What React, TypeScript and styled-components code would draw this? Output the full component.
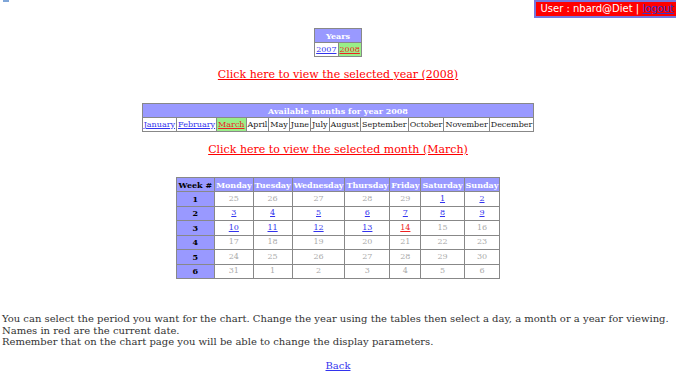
import React from 'react'
import styled, { createGlobalStyle } from 'styled-components'

const GlobalStyle = createGlobalStyle`
    html, body {
        margin: 0;
        padding: 0;
        background: #ffffff;
    }
    body {
        font-family: "DejaVu Serif", serif;
        font-size: 10px;
        color: #333333;
    }
`

const months = ['January', 'February', 'March', 'April', 'May', 'June', 'July', 'August', 'September', 'October', 'November', 'December']
const days = ['Monday', 'Tuesday', 'Wednesday', 'Thursday', 'Friday', 'Saturday', 'Sunday']

type Day = { n: number; kind: 'off' | 'link' | 'today' }

const off = (n: number): Day => ({ n, kind: 'off' })
const link = (n: number): Day => ({ n, kind: 'link' })

const weeks: Day[][] = [
    [off(25), off(26), off(27), off(28), off(29), link(1), link(2)],
    [link(3), link(4), link(5), link(6), link(7), link(8), link(9)],
    [link(10), link(11), link(12), link(13), { n: 14, kind: 'today' }, off(15), off(16)],
    [off(17), off(18), off(19), off(20), off(21), off(22), off(23)],
    [off(24), off(25), off(26), off(27), off(28), off(29), off(30)],
    [off(31), off(1), off(2), off(3), off(4), off(5), off(6)],
]

const App = () => {
    return (
        <Page>
            <GlobalStyle />
            <TopBar>
                <Corner />
                <UserBox>
                    User : nbard@Diet | <LogoutLink href='#'>logout</LogoutLink>
                </UserBox>
            </TopBar>

            <Grid>
                <thead>
                    <tr>
                        <HeadCell colSpan={2}>Years</HeadCell>
                    </tr>
                </thead>
                <tbody>
                    <tr>
                        <Cell><BlueLink href='#'>2007</BlueLink></Cell>
                        <Cell selected><RedLink href='#'>2008</RedLink></Cell>
                    </tr>
                </tbody>
            </Grid>

            <BigLink href='#' top={11}>Click here to view the selected year (2008)</BigLink>

            <Grid top={22}>
                <thead>
                    <tr>
                        <HeadCell colSpan={12}>Available months for year 2008</HeadCell>
                    </tr>
                </thead>
                <tbody>
                    <tr>
                        {months.map((m, i) => (
                            <Cell key={m} selected={i === 2}>
                                {i < 2 && <BlueLink href='#'>{m}</BlueLink>}
                                {i === 2 && <RedLink href='#'>{m}</RedLink>}
                                {i > 2 && <Plain>{m}</Plain>}
                            </Cell>
                        ))}
                    </tr>
                </tbody>
            </Grid>

            <BigLink href='#' top={11}>Click here to view the selected month (March)</BigLink>

            <Calendar>
                <thead>
                    <tr>
                        <WeekHead>Week #</WeekHead>
                        {days.map(d => (
                            <HeadCell key={d}>{d}</HeadCell>
                        ))}
                    </tr>
                </thead>
                <tbody>
                    {weeks.map((w, i) => (
                        <tr key={i}>
                            <WeekCell>{i + 1}</WeekCell>
                            {w.map((d, j) => (
                                <DayCell key={j}>
                                    {d.kind === 'off' && <Faded>{d.n}</Faded>}
                                    {d.kind === 'link' && <BlueLink href='#'>{d.n}</BlueLink>}
                                    {d.kind === 'today' && <RedLink href='#'>{d.n}</RedLink>}
                                </DayCell>
                            ))}
                        </tr>
                    ))}
                </tbody>
            </Calendar>

            <Notes>
                <p>You can select the period you want for the chart. Change the year using the tables then select a day, a month or a year for viewing.</p>
                <p>Names in red are the current date.</p>
                <p>Remember that on the chart page you will be able to change the display parameters.</p>
            </Notes>

            <BackLink href='#'>Back</BackLink>
        </Page>
    )
}

export default App

const Page = styled.div`
    display: flex;
    flex-direction: column;
    align-items: center;
    width: 676px;
    height: 375px;
    overflow: hidden;
`

const TopBar = styled.div`
    display: flex;
    justify-content: space-between;
    align-items: flex-start;
    width: 100%;
    height: 18px;
`

const Corner = styled.span`
    display: block;
    width: 6px;
    height: 2px;
    margin-left: 3px;
    background: #7fa6d8;
`

const UserBox = styled.div`
    box-sizing: border-box;
    height: 18px;
    padding: 0 2px 0 4px;
    background: #ff0000;
    border: 2px solid #7777dd;
    border-right: none;
    color: #ffffff;
    font-family: "DejaVu Sans", sans-serif;
    font-size: 10px;
    line-height: 14px;
    white-space: nowrap;
`

const LogoutLink = styled.a`
    color: #3333cc;
    text-decoration: underline;
`

const Grid = styled.table<{ top?: number }>`
    margin-top: ${p => p.top ?? 10}px;
    border-collapse: collapse;
    border: 1px solid #888888;
    font-size: 8px;
`

const HeadCell = styled.th`
    background: #9999ff;
    color: #ffffff;
    font-weight: bold;
    border: 1px solid #888888;
    padding: 0 1px;
    height: 13px;
    line-height: 10px;
    text-align: center;
    white-space: nowrap;
`

const Cell = styled.td<{ selected?: boolean }>`
    background: ${p => (p.selected ? '#99ee88' : '#ffffff')};
    border: 1px solid #888888;
    padding: 0 1px;
    height: 13px;
    line-height: 10px;
    white-space: nowrap;
`

const BlueLink = styled.a`
    color: #3333ee;
    text-decoration: underline;
`

const RedLink = styled.a`
    color: #ee2222;
    text-decoration: underline;
`

const Plain = styled.span`
    color: #222222;
`

const Faded = styled.span`
    color: #aaaaaa;
`

const BigLink = styled.a<{ top: number }>`
    margin-top: ${p => p.top}px;
    color: #ff0000;
    font-size: 11px;
    text-decoration: underline;
    line-height: 13px;
`

const Calendar = styled.table`
    margin-top: 21px;
    border-collapse: collapse;
    border: 1px solid #888888;
    font-size: 8px;
`

const WeekHead = styled.th`
    background: #9999ff;
    color: #000000;
    font-weight: bold;
    border: 1px solid #888888;
    padding: 0 2px;
    height: 13px;
    line-height: 10px;
    white-space: nowrap;
`

const WeekCell = styled.td`
    background: #9999ff;
    color: #000000;
    font-weight: bold;
    text-align: center;
    border: 1px solid #888888;
    height: 13.5px;
    padding: 0;
    line-height: 10px;
`

const DayCell = styled.td`
    background: #ffffff;
    text-align: center;
    border: 1px solid #888888;
    padding: 0 2px;
    height: 13.5px;
    line-height: 10px;
`

const Notes = styled.div`
    align-self: stretch;
    margin-top: 34px;
    padding-left: 2px;
    font-size: 10px;
    color: #333333;

    p {
        margin: 0;
        line-height: 11.5px;
    }
`

const BackLink = styled.a`
    margin-top: 12px;
    color: #3333ee;
    font-size: 10px;
    line-height: 12px;
    text-decoration: underline;
`
